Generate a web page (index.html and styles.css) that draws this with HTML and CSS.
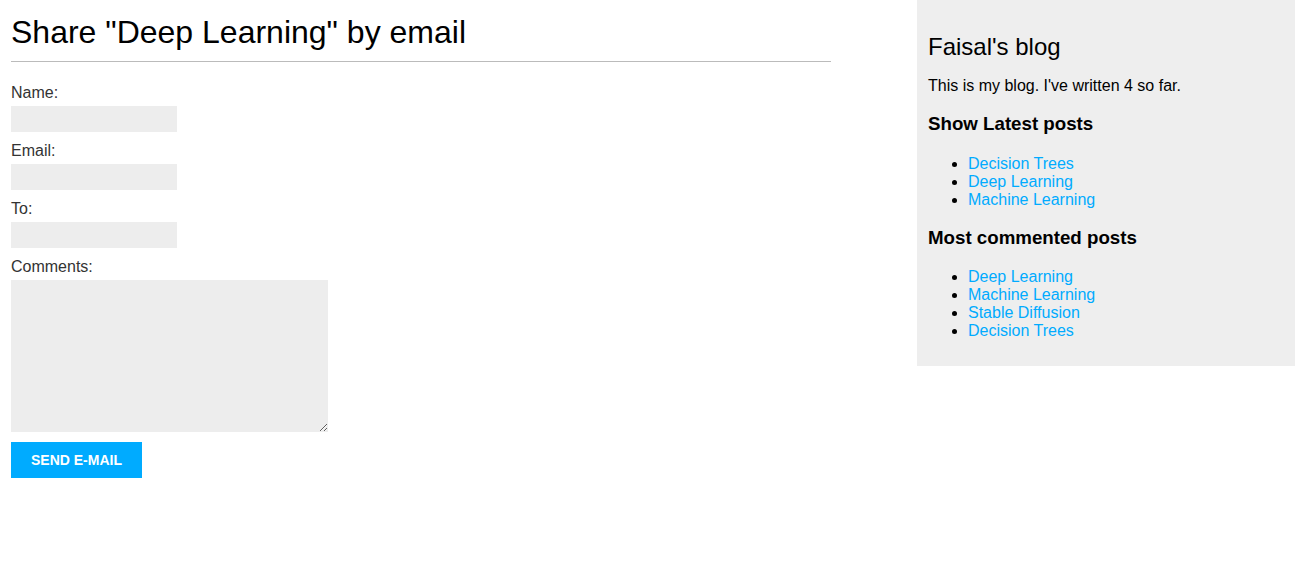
FILE: index.html
```html
<!DOCTYPE html>
<html>
<head>
<meta charset="utf-8">
<title>Share "Deep Learning" by email</title>
<link rel="stylesheet" href="styles.css">
</head>
<body>
<div class="page">
  <main class="content">
    <h1 class="title">Share "Deep Learning" by email</h1>
    <form class="share-form">
      <label class="field-label" for="name">Name:</label>
      <input class="field-input" type="text" id="name">
      <label class="field-label" for="email">Email:</label>
      <input class="field-input" type="text" id="email">
      <label class="field-label" for="to">To:</label>
      <input class="field-input" type="text" id="to">
      <label class="field-label" for="comments">Comments:</label>
      <textarea class="field-textarea" id="comments"></textarea>
      <button class="submit-btn" type="button">Send e-mail</button>
    </form>
  </main>
  <aside class="sidebar">
    <h2 class="side-title">Faisal's blog</h2>
    <p class="side-text">This is my blog. I've written 4 so far.</p>
    <h3 class="side-heading">Show Latest posts</h3>
    <ul class="side-list">
      <li><a href="#">Decision Trees</a></li>
      <li><a href="#">Deep Learning</a></li>
      <li><a href="#">Machine Learning</a></li>
    </ul>
    <h3 class="side-heading">Most commented posts</h3>
    <ul class="side-list">
      <li><a href="#">Deep Learning</a></li>
      <li><a href="#">Machine Learning</a></li>
      <li><a href="#">Stable Diffusion</a></li>
      <li><a href="#">Decision Trees</a></li>
    </ul>
  </aside>
</div>
</body>
</html>
```

FILE: styles.css
```css
html, body {
  margin: 0;
  padding: 0;
  background: #fff;
}
body {
  font-family: "Liberation Sans", Arial, sans-serif;
  font-size: 16px;
  color: #000;
}
.page {
  display: flex;
  justify-content: space-between;
  align-items: flex-start;
}
.content {
  width: 820px;
  margin-left: 11px;
}
.title {
  font-size: 32px;
  font-weight: normal;
  line-height: 37px;
  margin: 14px 0 0;
  padding: 0 0 10px;
  border-bottom: 1px solid #bbb;
  color: #000;
}
.share-form {
  display: flex;
  flex-direction: column;
  align-items: flex-start;
  padding-top: 22px;
}
.field-label {
  color: #333;
  line-height: 18px;
  height: 18px;
  margin-bottom: 4px;
}
.field-input, .field-textarea {
  box-sizing: border-box;
  border: 0;
  background: #ededed;
  padding: 6px 10px;
  margin: 0 0 10px;
  font-family: "Liberation Sans", Arial, sans-serif;
  font-size: 12px;
  outline: none;
}
.field-input {
  width: 166px;
  height: 26px;
}
.field-textarea {
  width: 317px;
  height: 152px;
  display: block;
}
.submit-btn {
  box-sizing: border-box;
  width: 131px;
  height: 36px;
  border: 0;
  background: #00abff;
  color: #fff;
  font-family: "Liberation Sans", Arial, sans-serif;
  font-weight: bold;
  font-size: 14px;
  text-transform: uppercase;
  padding: 0;
  cursor: pointer;
}
.sidebar {
  box-sizing: border-box;
  width: 378px;
  background: #eee;
  padding: 10px 11px 12px;
}
.side-title {
  font-size: 24px;
  font-weight: normal;
  line-height: 28px;
  margin: 23px 0 16px;
}
.side-text {
  margin: 0 0 18px;
  line-height: 18px;
}
.side-heading {
  font-size: 18.72px;
  font-weight: bold;
  line-height: 22px;
  margin: 0 0 19.5px;
}
.side-list {
  margin: 0 0 18px;
  padding-left: 40px;
  line-height: 18px;
}
.side-list:last-child {
  margin-bottom: 14px;
}
.side-list a {
  color: #00abff;
  text-decoration: none;
}
```
